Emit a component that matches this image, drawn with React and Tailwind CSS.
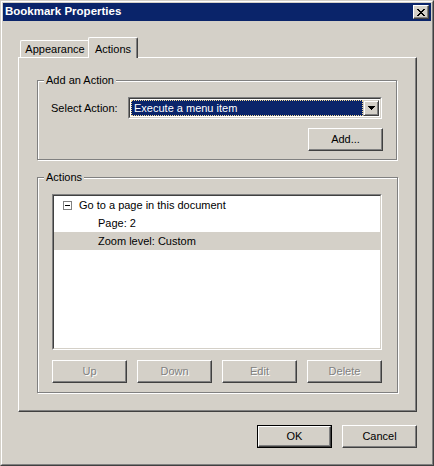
const FONT = { fontFamily: '"Liberation Sans", Arial, sans-serif' };

function Button({ children, disabled, isDefault, className = "" }) {
  const inner = (
    <div
      className={`flex h-full w-full items-center justify-center border border-t-white border-l-white border-r-[#404040] border-b-[#404040] bg-[#d4d0c8] shadow-[inset_-1px_-1px_0_#808080] ${
        disabled ? "text-[#808080] [text-shadow:1px_1px_0_#fff]" : "text-black"
      }`}
    >
      {children}
    </div>
  );
  if (isDefault) {
    return <div className={`h-[23px] w-[75px] border border-black ${className}`}>{inner}</div>;
  }
  return <div className={`h-[23px] w-[75px] ${className}`}>{inner}</div>;
}

function Group({ label, className = "", children }) {
  return (
    <div
      className={`relative border border-[#808080] shadow-[inset_1px_1px_0_#fff,1px_1px_0_#fff] ${className}`}
    >
      <span className="absolute left-[6px] top-[-8px] bg-[#d4d0c8] px-[2px] leading-[14px]">
        {label}
      </span>
      {children}
    </div>
  );
}

function Sunken({ className = "", children }) {
  return (
    <div
      className={`border border-t-[#808080] border-l-[#808080] border-r-white border-b-white ${className}`}
    >
      <div className="h-full w-full border border-t-[#404040] border-l-[#404040] border-r-[#d4d0c8] border-b-[#d4d0c8] bg-white">
        {children}
      </div>
    </div>
  );
}

export default function App() {
  return (
    <div
      className="h-[466px] w-[434px] border border-t-[#d4d0c8] border-l-[#d4d0c8] border-r-[#404040] border-b-[#404040] bg-[#d4d0c8] text-[11px] text-black"
      style={FONT}
    >
      <div className="flex h-full w-full flex-col border border-t-white border-l-white border-r-[#808080] border-b-[#808080] p-px">
        {/* title bar */}
        <div className="flex h-[18px] items-center justify-between bg-[#0a246a] pl-[2px] pr-[2px]">
          <span className="text-[11.5px] font-bold leading-none text-white">Bookmark Properties</span>
          <div className="flex h-[14px] w-[16px] items-center justify-center border border-t-white border-l-white border-r-[#404040] border-b-[#404040] bg-[#d4d0c8] shadow-[inset_-1px_-1px_0_#808080]">
            <svg width="8" height="7" viewBox="0 0 8 7" shapeRendering="crispEdges">
              <path
                d="M0 0h2v1h-2zM6 0h2v1h-2zM1 1h2v1h-2zM5 1h2v1h-2zM2 2h4v1h-4zM3 3h2v1h-2zM2 4h4v1h-4zM1 5h2v1h-2zM5 5h2v1h-2zM0 6h2v1h-2zM6 6h2v1h-2z"
                fill="#000"
              />
            </svg>
          </div>
        </div>

        <div className="flex flex-1 flex-col pl-[15px] pt-[16px]">
          {/* tabs */}
          <div className="relative z-10 flex h-[20px] items-end pl-[2px]">
            <div className="flex h-[17px] w-[69px] items-center justify-center rounded-tl-[2px] border-l border-t border-l-white border-t-white">
              Appearance
            </div>
            <div className="mb-[-1px] ml-[-1px] flex h-[21px] w-[50px] items-start justify-center rounded-tl-[2px] rounded-tr-[2px] border-l border-r border-t border-l-white border-t-white border-r-[#404040] bg-[#d4d0c8] pt-[3px] shadow-[inset_-1px_0_0_#808080]">
              Actions
            </div>
          </div>

          {/* panel */}
          <div className="h-[355px] w-[399px] border border-t-white border-l-white border-r-[#404040] border-b-[#404040]">
            <div className="h-full w-full border-b border-r border-b-[#808080] border-r-[#808080] pl-[18px] pt-[22px]">
              <Group label="Add an Action" className="h-[80px] w-[360px] pl-[13px] pr-[13px] pt-[16px]">
                <div className="flex items-center">
                  <span className="w-[77px]">Select Action:</span>
                  <Sunken className="h-[22px] w-[254px]">
                    <div className="flex h-full w-full items-stretch p-px">
                      <div className="flex flex-1 items-center border border-dotted border-[#f5db95] bg-[#0a246a] pl-[2px] text-white">
                        Execute a menu item
                      </div>
                      <div className="flex w-[16px] items-center justify-center border border-t-[#d4d0c8] border-l-[#d4d0c8] border-r-[#404040] border-b-[#404040] bg-[#d4d0c8] shadow-[inset_1px_1px_0_#fff,inset_-1px_-1px_0_#808080]">
                        <svg width="7" height="4" viewBox="0 0 7 4" shapeRendering="crispEdges">
                          <path d="M0 0h7v1h-7zM1 1h5v1h-5zM2 2h3v1h-3zM3 3h1v1h-1z" fill="#000" />
                        </svg>
                      </div>
                    </div>
                  </Sunken>
                </div>
                <div className="mt-[9px] flex justify-end">
                  <Button>Add...</Button>
                </div>
              </Group>

              <Group label="Actions" className="mt-[17px] h-[216px] w-[361px] pl-[14px] pt-[16px]">
                <Sunken className="h-[156px] w-[330px]">
                  <div className="flex flex-col">
                    <div className="flex h-[18px] items-center pl-[9px]">
                      <div className="flex h-[9px] w-[9px] items-center justify-center border border-[#808080] bg-white">
                        <div className="h-px w-[5px] bg-black" />
                      </div>
                      <span className="ml-[7px]">Go to a page in this document</span>
                    </div>
                    <div className="flex h-[18px] items-center pl-[44px]">Page: 2</div>
                    <div className="flex h-[18px] items-center bg-[#d4d0c8] pl-[44px]">Zoom level: Custom</div>
                  </div>
                </Sunken>
                <div className="mt-[10px] flex gap-[10px]">
                  <Button disabled>Up</Button>
                  <Button disabled>Down</Button>
                  <Button disabled>Edit</Button>
                  <Button disabled>Delete</Button>
                </div>
              </Group>
            </div>
          </div>

          {/* footer buttons */}
          <div className="mt-[13px] flex w-[399px] justify-end gap-[10px]">
            <Button isDefault>OK</Button>
            <Button>Cancel</Button>
          </div>
        </div>
      </div>
    </div>
  );
}
